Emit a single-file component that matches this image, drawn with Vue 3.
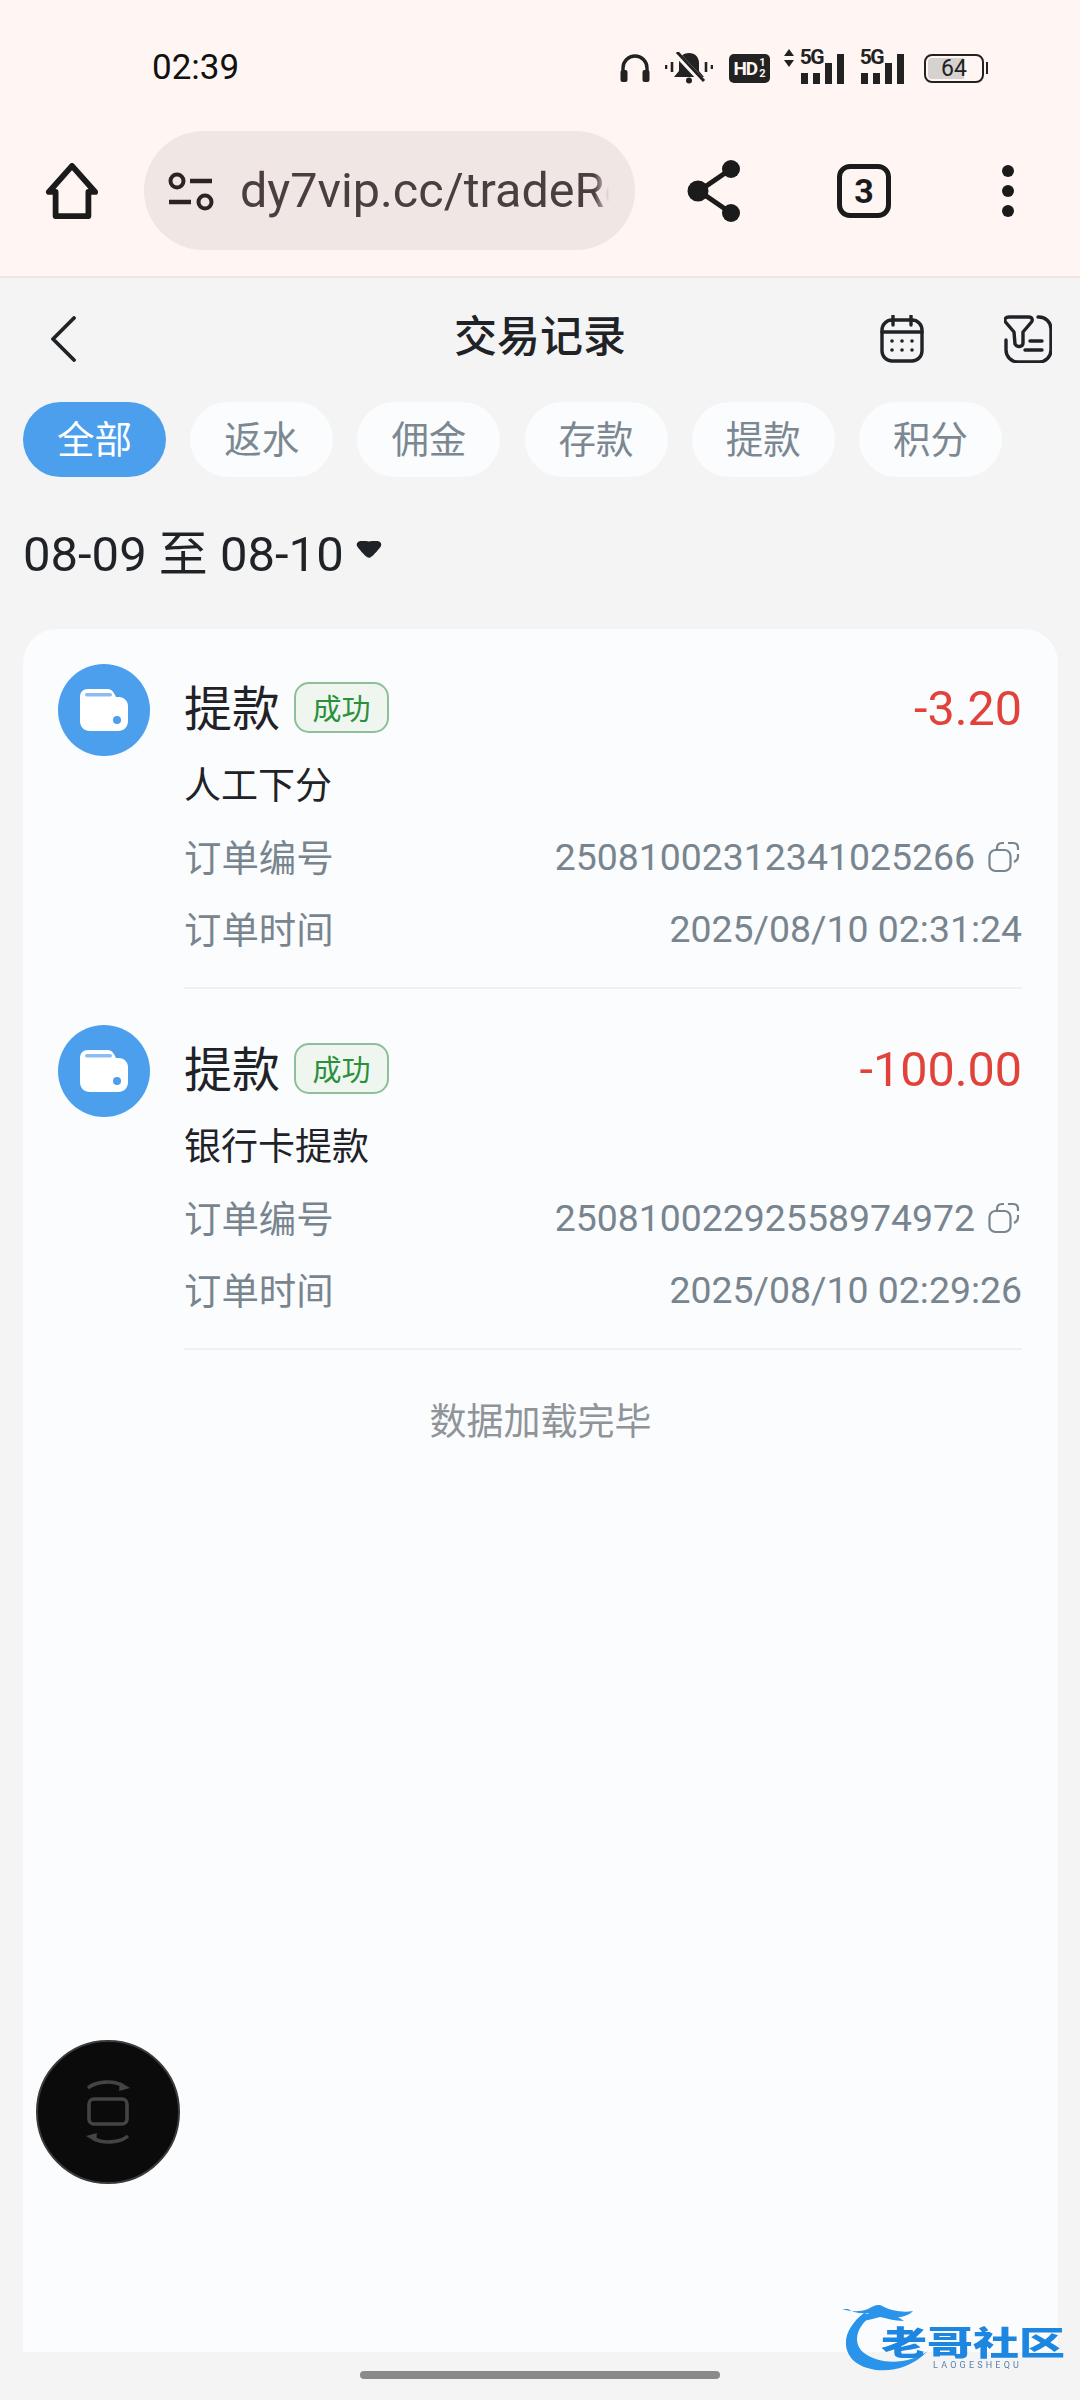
<script setup>
const chips = ['全部', '返水', '佣金', '存款', '提款', '积分']
const records = [
  { sub: '人工下分', amount: '-3.20', no: '25081002312341025266', time: '2025/08/10 02:31:24' },
  { sub: '银行卡提款', amount: '-100.00', no: '25081002292558974972', time: '2025/08/10 02:29:26' },
]
</script>

<template>
  <div class="page">
    <div class="browser">
      <div class="status">
        <span class="clock">02:39</span>
        <div class="status-icons">
          <svg class="si-head" viewBox="0 0 32 30" width="32" height="30">
            <path d="M4 18V15a12 12 0 0 1 24 0v3" fill="none" stroke="#222" stroke-width="3.4" />
            <rect x="1.5" y="17" width="7" height="12" rx="2" fill="#222" />
            <rect x="23.5" y="17" width="7" height="12" rx="2" fill="#222" />
          </svg>
          <svg class="si-bell" viewBox="0 0 48 32" width="48" height="32">
            <path d="M24 1c6 0 10 4 10 10v8l5 6H9l5-6v-8c0-6 4-10 10-10z" fill="#222" />
            <circle cx="24" cy="28.5" r="3" fill="#222" />
            <path d="M9 -1l29 31" stroke="#fff6f3" stroke-width="6" />
            <path d="M12 0l27 29" stroke="#222" stroke-width="3" />
            <path d="M1 13v4M7 10v10M41 10v10M47 13v4" stroke="#222" stroke-width="2.6" />
          </svg>
          <div class="hd"><span>HD</span><span class="hd-frac">1<br />2</span></div>
          <div class="signal first">
            <svg class="updown" viewBox="0 0 10 18" width="10" height="18"><path d="M5 0l5 7H0zM5 18l5-7H0z" fill="#222" /></svg>
            <span class="g5">5G</span>
            <i class="b1"></i><i class="b2"></i><i class="b3"></i><i class="b4"></i>
          </div>
          <div class="signal">
            <span class="g5">5G</span>
            <i class="b1"></i><i class="b2"></i><i class="b3"></i><i class="b4"></i>
          </div>
          <div class="battery">
            <div class="batt-body"><div class="batt-fill"></div><span>64</span></div>
            <div class="batt-cap"></div>
          </div>
        </div>
      </div>
      <div class="toolbar">
        <svg class="tool-home" viewBox="0 0 56 58" width="54" height="56">
          <path d="M28 3L4 30h7v25h34V30h7z" fill="none" stroke="#1c1b1b" stroke-width="6" stroke-linejoin="round" />
        </svg>
        <div class="omnibox">
          <svg viewBox="0 0 46 40" width="46" height="40">
            <circle cx="9" cy="10" r="6.5" fill="none" stroke="#2b2424" stroke-width="4" />
            <path d="M22 10h22M1 31h22" stroke="#2b2424" stroke-width="4.5" />
            <circle cx="37" cy="31" r="6.5" fill="none" stroke="#2b2424" stroke-width="4" />
          </svg>
          <div class="url">dy7vip.cc/tradeRecord</div>
        </div>
        <svg class="tool-share" viewBox="0 0 56 64" width="56" height="64">
          <path d="M44 10L12 32l32 22" fill="none" stroke="#1c1b1b" stroke-width="5" />
          <circle cx="44" cy="10" r="9" fill="#1c1b1b" />
          <circle cx="11" cy="32" r="10.5" fill="#1c1b1b" />
          <circle cx="44" cy="54" r="9" fill="#1c1b1b" />
        </svg>
        <div class="tabs">3</div>
        <div class="dots"><i></i><i></i><i></i></div>
      </div>
    </div>

    <div class="nav">
      <svg class="back" viewBox="0 0 28 46" width="28" height="46">
        <path d="M25 2L4 23l21 21" fill="none" stroke="#1f2327" stroke-width="3.8" stroke-linecap="round" stroke-linejoin="round" />
      </svg>
      <div class="title">交易记录</div>
      <svg class="cal" viewBox="0 0 44 48" width="44" height="48">
        <rect x="2" y="5" width="40" height="41" rx="10" fill="none" stroke="#1f2327" stroke-width="3.4" />
        <path d="M2 17h40M13 1v9M31 1v9" stroke="#1f2327" stroke-width="3.4" stroke-linecap="round" />
        <g fill="#1f2327">
          <circle cx="12" cy="26" r="1.8" /><circle cx="22" cy="26" r="1.8" /><circle cx="32" cy="26" r="1.8" />
          <circle cx="12" cy="35" r="1.8" /><circle cx="22" cy="35" r="1.8" /><circle cx="32" cy="35" r="1.8" />
        </g>
      </svg>
      <svg class="filter" viewBox="0 0 48 48" width="48" height="48">
        <path d="M2 25v10a12 12 0 0 0 12 12h21a12 12 0 0 0 12-12V14A12 12 0 0 0 35 2h-1" fill="none" stroke="#1f2327" stroke-width="3.4" stroke-linecap="round" />
        <path d="M5 2h20c3 0 4 3 2.5 5L19 17v11c0 4-6 5-8 1l-1-12L1.5 7C0 5 1 2 5 2z" fill="none" stroke="#1f2327" stroke-width="3.4" stroke-linejoin="round" />
        <path d="M26 26h12M21 35h17" stroke="#1f2327" stroke-width="3.4" stroke-linecap="round" />
      </svg>
    </div>

    <div class="chips">
      <div v-for="(c, idx) in chips" :key="c" class="chip" :class="{ on: idx === 0 }">{{ c }}</div>
    </div>

    <div class="range">
      <span>08-09 至 08-10</span>
      <svg viewBox="0 0 26 20" width="26" height="20"><path d="M6 2c3 0 5 0 7 .5 2-.5 4-.5 7-.5 4 0 6 2 5 5-1 2-8 10-10 11-1 1-3 1-4 0C9 17 2 9 1 7 0 4 2 2 6 2z" fill="#1f2327" /></svg>
    </div>

    <div class="card">
      <div v-for="r in records" :key="r.no" class="item">
        <div class="avatar">
          <svg viewBox="0 0 92 92" width="92" height="92">
            <path d="M30 25h19c4 0 6 2 8 6l1 2h3c5 0 9 4 9 9v15c0 6-4 10-10 10H32c-6 0-10-4-10-10V33c0-5 3-8 8-8z" fill="#fff" />
            <rect x="27" y="29" width="27" height="3.5" rx="1.7" fill="#8dbdf0" />
            <circle cx="59" cy="56" r="4" fill="#4c9fec" />
          </svg>
        </div>
        <div class="body">
          <div class="head">
            <span class="kind">提款</span>
            <span class="badge">成功</span>
            <span class="amount">{{ r.amount }}</span>
          </div>
          <div class="sub">{{ r.sub }}</div>
          <div class="row">
            <span class="label">订单编号</span>
            <span class="val">
              {{ r.no }}
              <svg viewBox="0 0 32 32" width="32" height="32">
                <rect x="1.5" y="9" width="21" height="21" rx="6" fill="none" stroke="#78858f" stroke-width="2.2" />
                <path d="M9 9V7c0-3 2-5 5-5h2M20 2h5c3 0 5 2 5 5v2M30 13v3c0 2-2 4-4 5" fill="none" stroke="#78858f" stroke-width="2.2" />
              </svg>
            </span>
          </div>
          <div class="row">
            <span class="label">订单时间</span>
            <span class="val">{{ r.time }}</span>
          </div>
        </div>
      </div>
      <div class="done">数据加载完毕</div>
    </div>

    <!-- floating button -->
    <div class="float-btn">
      <svg viewBox="0 0 46 66" width="46" height="66">
        <rect x="4" y="20" width="38" height="25" rx="5" fill="none" stroke="#444" stroke-width="3.6" />
        <path d="M3 9C11 2 29 1 38 7" fill="none" stroke="#444" stroke-width="3.6" />
        <path d="M45 9l-11 3 1-9z" fill="#444" />
        <path d="M43 57C35 64 17 65 8 59" fill="none" stroke="#444" stroke-width="3.6" />
        <path d="M1 57l11-3-1 9z" fill="#444" />
      </svg>
    </div>

    <!-- watermark -->
    <div class="mark">
      <svg viewBox="0 0 100 72" width="100" height="72">
        <path d="M22 10C6 22-4 42 12 58c14 12 48 16 74-10C66 62 38 62 22 50 10 40 14 24 30 12z" fill="#2a93ea" />
        <path d="M0 6c10 3 18 3 26 0 6-3 10-6 16-2 6 3 18 6 29 4-4 4-10 6-15 6l6 4c-10 0-18-3-24-4-8 2-14 4-20 4 2-3 6-6 9-8-8 1-15 0-21-4z" fill="#2a93ea" />
      </svg>
      <div class="mark-name">老哥社区</div>
      <div class="mark-en">LAOGESHEQU</div>
    </div>

    <div class="home-bar"></div>
  </div>
</template>

<style scoped>
.page {
  position: relative;
  width: 1080px;
  height: 2400px;
  overflow: hidden;
  display: flex;
  flex-direction: column;
  background: #f4f4f4;
  color: #1f2327;
  font-family: Roboto, "Noto Sans CJK SC", sans-serif;
}

.browser {
  height: 278px;
  flex: none;
  box-sizing: border-box;
  background: #fff6f3;
  border-bottom: 2px solid #efe4e2;
}

.status {
  height: 131px;
  box-sizing: border-box;
  padding: 50px 92px 0 152px;
  display: flex;
  justify-content: space-between;
  align-items: flex-start;
}

.clock {
  font-size: 35px;
  line-height: 36px;
  color: #111;
}

.status-icons {
  display: flex;
  align-items: center;
  height: 36px;
}

.si-head { margin-right: 14px; }
.si-bell { margin-right: 16px; }

.hd {
  width: 41px;
  height: 29px;
  background: #222;
  border-radius: 5px;
  color: #fff6f3;
  font-size: 19px;
  font-weight: 700;
  display: flex;
  align-items: center;
  justify-content: center;
  margin-right: 14px;
  letter-spacing: -1px;
}

.hd-frac {
  font-size: 11px;
  line-height: 11px;
  margin-left: 2px;
  letter-spacing: 0;
}

.signal {
  position: relative;
  display: flex;
  align-items: flex-end;
  gap: 5px;
  height: 32px;
  width: 44px;
  justify-content: flex-end;
}

.signal.first {
  width: 60px;
  margin-right: 16px;
}

.signal i {
  display: block;
  width: 7px;
  background: #222;
}

.b1 { height: 11px; }
.b2 { height: 11px; }
.b3 { height: 21px; }
.b4 { height: 30px; }

.g5 {
  position: absolute;
  top: -6px;
  right: 21px;
  font-size: 21px;
  font-weight: 700;
  line-height: 22px;
  letter-spacing: -1.5px;
  color: #222;
}

.updown { position: absolute; left: 0; top: -3px; }

.battery {
  display: flex;
  align-items: center;
  margin-left: 20px;
}

.batt-body {
  position: relative;
  width: 60px;
  height: 29px;
  box-sizing: border-box;
  border: 2.5px solid #222;
  border-radius: 8px;
  overflow: hidden;
  display: flex;
  align-items: center;
  justify-content: center;
  font-size: 23px;
  color: #222;
}

.batt-fill {
  position: absolute;
  left: 2px;
  top: 2px;
  bottom: 2px;
  width: 36px;
  background: #d6d2d0;
  border-radius: 4px 0 0 4px;
}

.batt-body span { position: relative; }

.batt-cap {
  width: 2px;
  height: 12px;
  margin-left: 2px;
  background: #222;
}

.toolbar {
  height: 119px;
  display: flex;
  align-items: center;
  padding-left: 45px;
}

.omnibox {
  width: 491px;
  height: 119px;
  margin-left: 45px;
  padding: 0 26px 0 24px;
  box-sizing: border-box;
  border-radius: 60px;
  background: #f0e6e4;
  display: flex;
  align-items: center;
  gap: 26px;
  overflow: hidden;
}

.omnibox svg { flex: none; }

.url {
  overflow: hidden;
  white-space: nowrap;
  font-size: 48.5px;
  color: #4a3f3f;
  -webkit-mask-image: linear-gradient(90deg, #000 96%, transparent);
  mask-image: linear-gradient(90deg, #000 96%, transparent);
}

.tool-share { margin-left: 52px; }

.tabs {
  width: 54px;
  height: 54px;
  margin-left: 94px;
  box-sizing: border-box;
  border: 5.5px solid #1c1b1b;
  border-radius: 13px;
  font-size: 34px;
  font-weight: 700;
  color: #1c1b1b;
  display: flex;
  align-items: center;
  justify-content: center;
}

.dots {
  margin-left: 111px;
  display: flex;
  flex-direction: column;
  gap: 8px;
}

.dots i {
  display: block;
  width: 12px;
  height: 12px;
  border-radius: 50%;
  background: #1c1b1b;
}

.nav {
  position: relative;
  height: 124px;
  flex: none;
  box-sizing: border-box;
  display: flex;
  align-items: center;
  padding: 0 0 3px 49px;
}

.title {
  position: absolute;
  left: 0;
  right: 0;
  top: 29px;
  line-height: 60px;
  text-align: center;
  font-size: 43px;
  font-weight: 500;
}

.cal { margin-left: auto; }
.filter { margin: 0 28px 0 80px; }

.chips {
  display: flex;
  gap: 24.2px;
  padding-left: 23px;
  flex: none;
}

.chip {
  width: 143px;
  height: 75px;
  box-sizing: border-box;
  padding-bottom: 6px;
  border-radius: 38px;
  background: #fbfcfd;
  color: #7c8891;
  font-size: 37.5px;
  display: flex;
  align-items: center;
  justify-content: center;
}

.chip.on {
  background: #4c9fec;
  color: #fff;
}

.range {
  margin-top: 42px;
  height: 60px;
  padding-left: 23px;
  display: flex;
  align-items: center;
  gap: 12px;
  font-size: 49px;
  flex: none;
}

.card {
  margin: 50px 22px 48px 23px;
  padding-top: 35px;
  flex: 1;
  background: #fbfcfe;
  border-radius: 34px 34px 0 0;
}

.item {
  display: flex;
  margin-bottom: 36px;
  padding: 0 36px 0 35px;
}

.avatar {
  width: 92px;
  height: 92px;
  flex: none;
  border-radius: 50%;
  background: #4c9fec;
}

.body {
  flex: 1;
  margin-left: 34px;
  padding-bottom: 22px;
  border-bottom: 2px solid #eef0f2;
}

.head {
  height: 88px;
  display: flex;
  align-items: center;
}

.kind {
  margin-top: -6px;
  font-size: 48px;
  color: #1f2327;
}

.badge {
  width: 95px;
  height: 51px;
  box-sizing: border-box;
  margin: -2px 0 0 14px;
  border: 2px solid #8fbf9a;
  border-radius: 15px;
  background: #eef6ef;
  color: #2b8f3c;
  font-size: 29px;
  display: flex;
  align-items: center;
  justify-content: center;
}

.amount {
  margin-left: auto;
  font-size: 48.5px;
  color: #e1423a;
}

.sub {
  height: 69px;
  line-height: 70px;
  font-size: 37px;
}

.row {
  height: 72px;
  display: flex;
  justify-content: space-between;
  align-items: center;
  font-size: 37.4px;
  color: #78858f;
}

.label { margin-top: -3px; }

.val {
  display: flex;
  align-items: center;
  gap: 13px;
}

.val svg { margin-right: 2px; }

.done {
  margin-top: 42px;
  text-align: center;
  font-size: 37px;
  color: #8f9498;
}

.float-btn {
  position: absolute;
  left: 36px;
  top: 2040px;
  width: 144px;
  height: 144px;
  box-sizing: border-box;
  border: 2px solid #3a3a3a;
  border-radius: 50%;
  background: #0b0b0b;
  display: flex;
  align-items: center;
  justify-content: center;
}

.mark {
  position: absolute;
  left: 842px;
  top: 2303px;
  width: 226px;
  height: 72px;
  filter: blur(0.5px);
}

.mark svg { display: block; }

.mark-name {
  position: absolute;
  left: 39px;
  top: 24px;
  font-size: 46px;
  line-height: 32px;
  height: 32px;
  font-weight: 900;
  white-space: nowrap;
  color: #1d86e0;
  transform: scaleY(0.72);
}

.mark-en {
  position: absolute;
  left: 91px;
  top: 57px;
  font-size: 9px;
  line-height: 10px;
  letter-spacing: 3.2px;
  color: #5a7fae;
  white-space: nowrap;
}

.home-bar {
  position: absolute;
  left: 360px;
  top: 2371px;
  width: 360px;
  height: 8px;
  border-radius: 4px;
  background: #8a8a8a;
}
</style>
